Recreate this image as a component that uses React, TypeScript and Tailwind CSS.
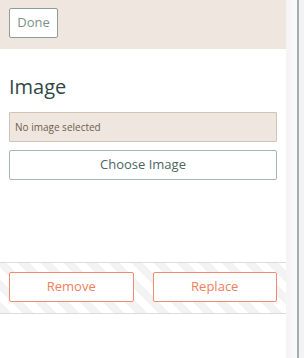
export default function App() {
  return (
    <div className="flex h-[358px] w-[304px] overflow-hidden bg-white font-['Open_Sans',sans-serif]">
      {/* Editor panel */}
      <div className="flex w-[286px] shrink-0 flex-col bg-white">
        <div className="h-[49px] bg-[#efe7df] px-[9px] pt-[8px]">
          <button className="h-[30px] w-[49px] rounded-[2px] border border-[#8d9d9c] bg-white text-[13px] text-[#7d8f8f]">
            Done
          </button>
        </div>

        <div className="flex flex-col px-[9px]">
          <h2 className="mt-[24px] text-[20px] leading-[28px] text-[#2f4747]">Image</h2>
          <div className="mt-[11px] flex h-[30px] items-center rounded-[1px] border border-[#d2c3b2] bg-[#efe7df] px-[5px] text-[10px] text-[#6d5d4d]">
            No image selected
          </div>
          <button className="mt-[8px] h-[30px] rounded-[2px] border border-[#a5b6b6] bg-white text-[13px] text-[#4d6565]">
            Choose Image
          </button>
        </div>

        <div className="mt-[82px] flex h-[52px] gap-[19px] border-y border-[#dcdcdc] bg-[repeating-linear-gradient(45deg,#f3f3f3_0,#f3f3f3_8px,#ffffff_8px,#ffffff_16px)] px-[9px] pt-[9px]">
          <button className="h-[30px] w-[125px] rounded-[2px] border border-[#f38a6e] bg-white text-[13px] text-[#f0805f]">
            Remove
          </button>
          <button className="h-[30px] w-[125px] rounded-[2px] border border-[#f38a6e] bg-white text-[13px] text-[#f0805f]">
            Replace
          </button>
        </div>
      </div>

      {/* Side gutter */}
      <div className="w-[11px] shrink-0 bg-[linear-gradient(90deg,#f4f4f4,#fafafa)]" />
      <div className="w-[2px] shrink-0 bg-[#a4aeb1]" />
      <div className="flex-1 bg-[#f3f3f3]" />
    </div>
  );
}
